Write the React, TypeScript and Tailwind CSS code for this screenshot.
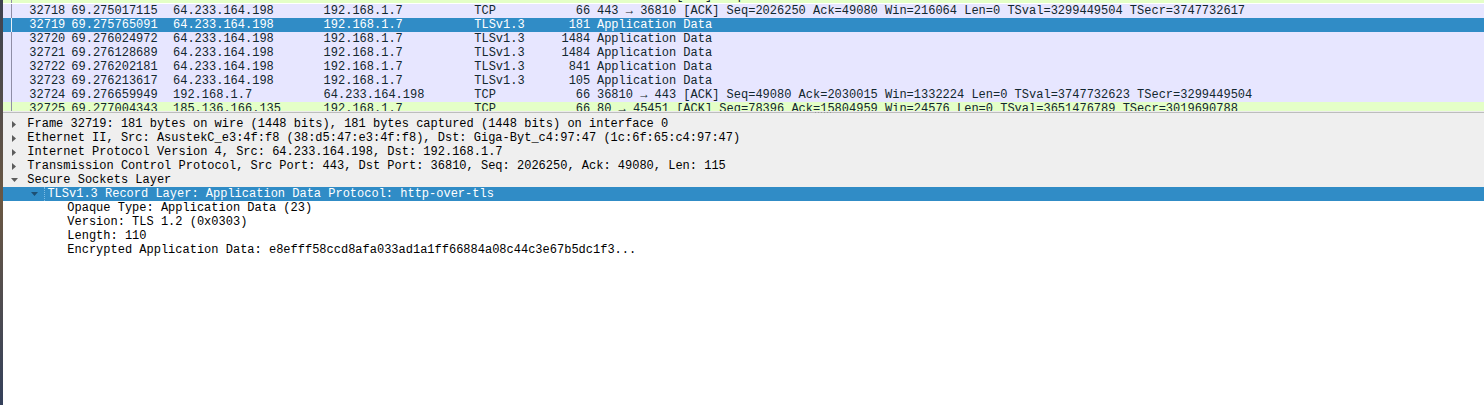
import clsx from "clsx";

type Packet = {
  no: string;
  time: string;
  src: string;
  dst: string;
  proto: string;
  len: string;
  info: string;
  color: "tcp" | "http";
  selected?: boolean;
};

// row scrolled mostly out of view above 32718
const partial: Packet = {
  no: "32717",
  time: "69.274998311",
  src: "185.136.166.135",
  dst: "192.168.1.7",
  proto: "TCP",
  len: "66",
  info: "80 → 45451 [ACK] Seq=78396 Ack=15803511 Win=24576 Len=0 TSval=3651476789 TSecr=3019690786",
  color: "http",
};

const packets: Packet[] = [
  {
    no: "32718",
    time: "69.275017115",
    src: "64.233.164.198",
    dst: "192.168.1.7",
    proto: "TCP",
    len: "66",
    info: "443 → 36810 [ACK] Seq=2026250 Ack=49080 Win=216064 Len=0 TSval=3299449504 TSecr=3747732617",
    color: "tcp",
  },
  {
    no: "32719",
    time: "69.275765091",
    src: "64.233.164.198",
    dst: "192.168.1.7",
    proto: "TLSv1.3",
    len: "181",
    info: "Application Data",
    color: "tcp",
    selected: true,
  },
  {
    no: "32720",
    time: "69.276024972",
    src: "64.233.164.198",
    dst: "192.168.1.7",
    proto: "TLSv1.3",
    len: "1484",
    info: "Application Data",
    color: "tcp",
  },
  {
    no: "32721",
    time: "69.276128689",
    src: "64.233.164.198",
    dst: "192.168.1.7",
    proto: "TLSv1.3",
    len: "1484",
    info: "Application Data",
    color: "tcp",
  },
  {
    no: "32722",
    time: "69.276202181",
    src: "64.233.164.198",
    dst: "192.168.1.7",
    proto: "TLSv1.3",
    len: "841",
    info: "Application Data",
    color: "tcp",
  },
  {
    no: "32723",
    time: "69.276213617",
    src: "64.233.164.198",
    dst: "192.168.1.7",
    proto: "TLSv1.3",
    len: "105",
    info: "Application Data",
    color: "tcp",
  },
  {
    no: "32724",
    time: "69.276659949",
    src: "192.168.1.7",
    dst: "64.233.164.198",
    proto: "TCP",
    len: "66",
    info: "36810 → 443 [ACK] Seq=49080 Ack=2030015 Win=1332224 Len=0 TSval=3747732623 TSecr=3299449504",
    color: "tcp",
  },
  {
    no: "32725",
    time: "69.277004343",
    src: "185.136.166.135",
    dst: "192.168.1.7",
    proto: "TCP",
    len: "66",
    info: "80 → 45451 [ACK] Seq=78396 Ack=15804959 Win=24576 Len=0 TSval=3651476789 TSecr=3019690788",
    color: "http",
  },
];

type Node = {
  label: string;
  level: 0 | 1 | 2;
  arrow?: "right" | "down";
  selected?: boolean;
};

const topNodes: Node[] = [
  {
    label: "Frame 32719: 181 bytes on wire (1448 bits), 181 bytes captured (1448 bits) on interface 0",
    level: 0,
    arrow: "right",
  },
  {
    label: "Ethernet II, Src: AsustekC_e3:4f:f8 (38:d5:47:e3:4f:f8), Dst: Giga-Byt_c4:97:47 (1c:6f:65:c4:97:47)",
    level: 0,
    arrow: "right",
  },
  {
    label: "Internet Protocol Version 4, Src: 64.233.164.198, Dst: 192.168.1.7",
    level: 0,
    arrow: "right",
  },
  {
    label: "Transmission Control Protocol, Src Port: 443, Dst Port: 36810, Seq: 2026250, Ack: 49080, Len: 115",
    level: 0,
    arrow: "right",
  },
  { label: "Secure Sockets Layer", level: 0, arrow: "down" },
];

const tlsNodes: Node[] = [
  {
    label: "TLSv1.3 Record Layer: Application Data Protocol: http-over-tls",
    level: 1,
    arrow: "down",
    selected: true,
  },
  { label: "Opaque Type: Application Data (23)", level: 2 },
  { label: "Version: TLS 1.2 (0x0303)", level: 2 },
  { label: "Length: 110", level: 2 },
  {
    label: "Encrypted Application Data: e8efff58ccd8afa033ad1a1ff66884a08c44c3e67b5dc1f3...",
    level: 2,
  },
];

function PacketRow({ p }: { p: Packet }) {
  return (
    <div
      className={clsx(
        "flex h-[14px] items-center whitespace-pre",
        p.selected
          ? "bg-[#308cc6] text-white"
          : p.color === "http"
            ? "bg-[#e4ffc7] text-[#12272e]"
            : "bg-[#e7e6ff] text-[#12272e]"
      )}
    >
      <div className="w-[8px] shrink-0" />
      <div
        className={clsx(
          "h-full w-px shrink-0",
          p.selected ? "bg-[#e6f1f9]" : "bg-[#8e8ea6]"
        )}
      />
      <div className="w-[17.3px] shrink-0" />
      <span className="w-[42px] shrink-0">{p.no}</span>
      <span className="w-[101.7px] shrink-0">{p.time}</span>
      <span className="w-[150.6px] shrink-0">{p.src}</span>
      <span className="w-[150.7px] shrink-0">{p.dst}</span>
      <span className="w-[80px] shrink-0">{p.proto}</span>
      <span className="w-[36px] shrink-0 text-right">{p.len}</span>
      <span className="pl-[6.7px]">{p.info}</span>
    </div>
  );
}

function Arrow({ dir, light }: { dir: "right" | "down"; light?: boolean }) {
  const fill = light ? "#1d4f73" : "#5c5c5c";
  if (dir === "right") {
    return (
      <svg width="4" height="7" viewBox="0 0 4 7">
        <polygon points="0,0 4,3.5 0,7" fill={fill} />
      </svg>
    );
  }
  return (
    <svg width="7" height="4" viewBox="0 0 7 4">
      <polygon points="0,0 7,0 3.5,4" fill={fill} />
    </svg>
  );
}

function TreeRow({ n }: { n: Node }) {
  return (
    <div
      className={clsx(
        "flex h-[14px] items-center whitespace-pre",
        n.selected ? "bg-[#308cc6] text-white" : "text-black",
        n.level === 1 && "pl-[20px]",
        n.level === 2 && "pl-[40px]"
      )}
    >
      {n.selected ? (
        <>
          <div className="flex h-full w-[21px] shrink-0 items-center pl-[7.5px]">
            {n.arrow && <Arrow dir={n.arrow} light />}
          </div>
          <span className="h-full border-l border-dotted border-[#7fbbe3] pr-[2px] pl-[2.4px]">
            {n.label}
          </span>
        </>
      ) : (
        <>
          <div
            className={clsx(
              "flex h-full w-[24.3px] shrink-0 items-center",
              n.arrow === "down" ? "pl-[8px]" : "pl-[8.7px]"
            )}
          >
            {n.arrow && <Arrow dir={n.arrow} />}
          </div>
          <span>{n.label}</span>
        </>
      )}
    </div>
  );
}

export default function App() {
  return (
    <div className="flex h-[405px] w-[1484px] overflow-hidden bg-white font-['Liberation_Mono','DejaVu_Sans_Mono',monospace] text-[12px] leading-[14px]">
      <div className="w-[3px] shrink-0 bg-gradient-to-b from-[#3d4250] via-[#6a5742] to-[#34405a]" />
      <div className="flex min-w-0 flex-1 flex-col">
        <div className="h-[111px] shrink-0 overflow-hidden">
          <div className="h-[4px] overflow-hidden">
            <div className="-mt-[11px]">
              <PacketRow p={partial} />
            </div>
          </div>
          {packets.map((p) => (
            <PacketRow key={p.no} p={p} />
          ))}
        </div>
        <div className="h-px shrink-0 bg-[#ececec]" />
        <div className="relative flex-1 border-t border-[#bdbdbd] bg-white">
          <div className="absolute -top-[1px] left-[812px] flex gap-[2px]">
            {[0, 1, 2, 3, 4, 5].map((i) => (
              <span key={i} className="h-px w-px bg-[#9a9a9a]" />
            ))}
          </div>
          <div className="bg-[#efefef] pt-[4px]">
            {topNodes.map((n) => (
              <TreeRow key={n.label} n={n} />
            ))}
          </div>
          {tlsNodes.map((n) => (
            <TreeRow key={n.label} n={n} />
          ))}
        </div>
      </div>
    </div>
  );
}
